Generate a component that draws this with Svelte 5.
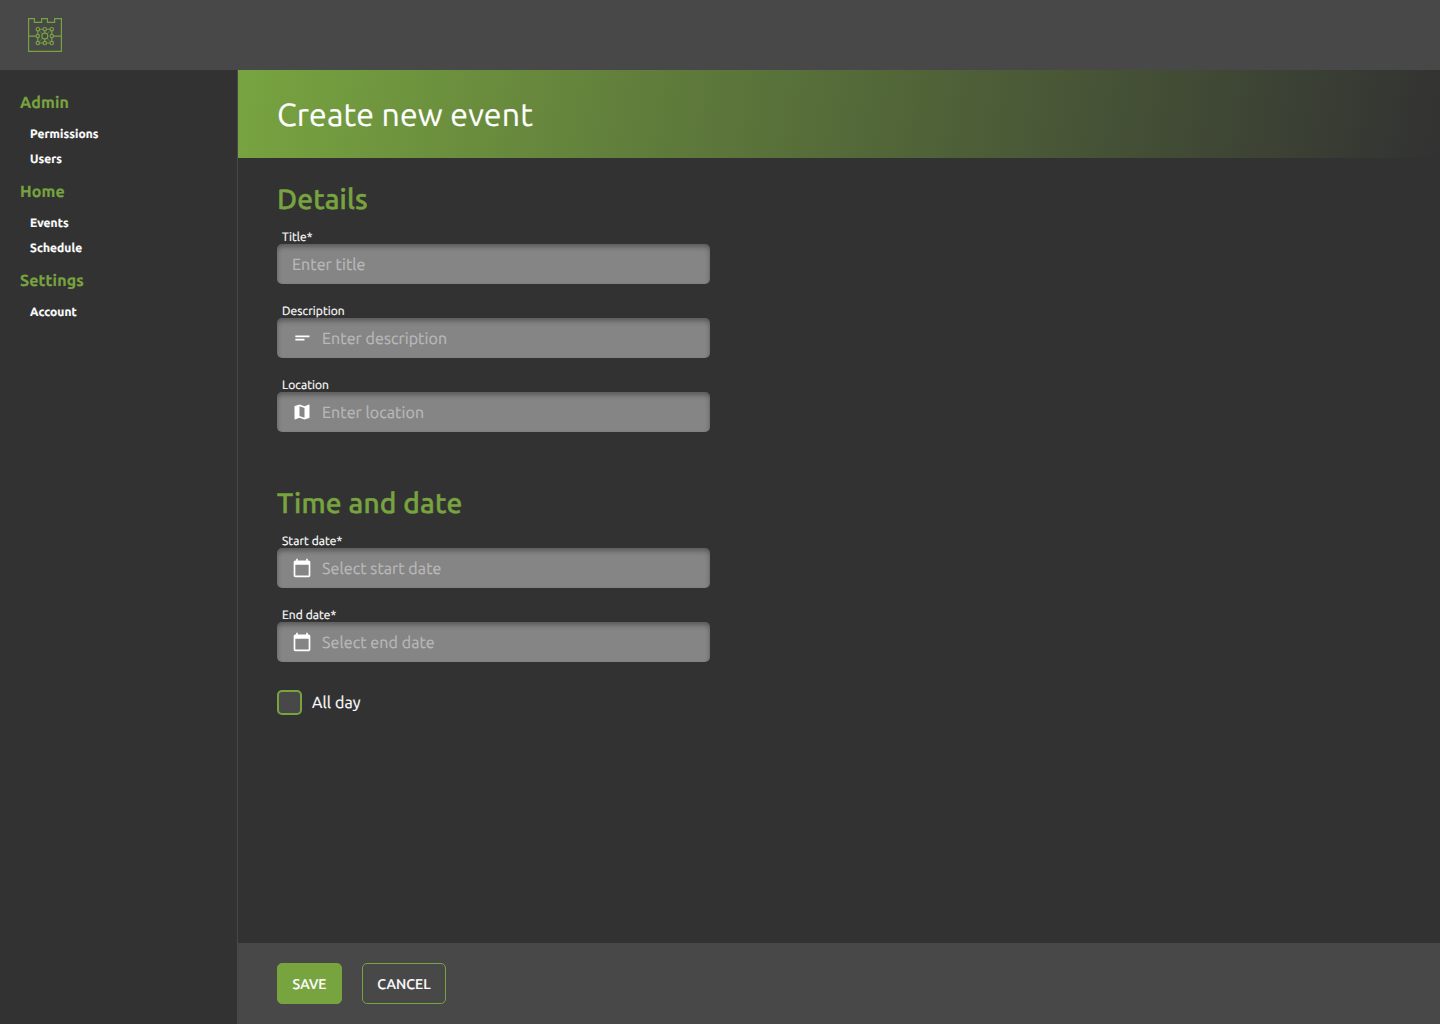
<script>
  const menu = [
    { title: 'Admin', items: ['Permissions', 'Users'] },
    { title: 'Home', items: ['Events', 'Schedule'] },
    { title: 'Settings', items: ['Account'] }
  ];
  const sections = [
    {
      title: 'Details',
      fields: [
        { label: 'Title*', hint: 'Enter title', icon: null },
        { label: 'Description', hint: 'Enter description', icon: 'notes' },
        { label: 'Location', hint: 'Enter location', icon: 'map' }
      ]
    },
    {
      title: 'Time and date',
      fields: [
        { label: 'Start date*', hint: 'Select start date', icon: 'calendar' },
        { label: 'End date*', hint: 'Select end date', icon: 'calendar' }
      ]
    }
  ];
  const icons = {
    notes: 'M4 9h17v2H4V9zm0 4h11v2H4v-2z',
    map: 'M20.5 3l-.16.03L15 5.1 9 3 3.36 4.9c-.21.07-.36.25-.36.48V20.5c0 .28.22.5.5.5l.16-.03L9 18.9l6 2.1 5.64-1.9c.21-.07.36-.25.36-.48V3.5c0-.28-.22-.5-.5-.5zM15 19l-6-2.11V5l6 2.11V19z',
    calendar: 'M20 3h-1V1h-2v2H7V1H5v2H4c-1.1 0-2 .9-2 2v16c0 1.1.9 2 2 2h16c1.1 0 2-.9 2-2V5c0-1.1-.9-2-2-2zm0 18H4V8h16v13z'
  };
  const nodes = [[17.8, 19.2], [24.8, 19.2], [31.8, 19.2], [17.8, 26.1], [31.8, 26.1], [17.8, 33], [24.8, 33], [31.8, 33]];
</script>

<div class="app">
  <header class="topbar">
    <svg class="logo" viewBox="0 0 50 50">
      <path d="M8.6 41.4V8.6H14.4V12.3H21.6V8.6H27.4V12.3H34.6V8.6H41.4V41.4Z" />
      <path d="M8.6 26.1H16.1M33.5 26.1H41.4M19.5 19.2H23.1M26.5 19.2H30.1M19.5 33H23.1M26.5 33H30.1M17.8 20.9V24.4M17.8 27.8V31.3M31.8 20.9V24.4M31.8 27.8V31.3M24.8 20.9v2.2M24.8 29.1v2.2" />
      <path class="faint" d="M19 20.4l3.7 3.6M30.6 20.4l-3.7 3.6M19 31.8l3.7-3.6M30.6 31.8l-3.7-3.6" />
      {#each nodes as [cx, cy]}
        <circle {cx} {cy} r="1.7" />
      {/each}
      <circle cx="24.8" cy="26.1" r="3" />
    </svg>
  </header>

  <div class="body">
    <nav class="sidebar">
      {#each menu as group}
        <h3>{group.title}</h3>
        {#each group.items as item}
          <a href="#top">{item}</a>
        {/each}
      {/each}
    </nav>

    <main>
      <div class="banner"><h1>Create new event</h1></div>
      <form>
        {#each sections as section}
          <section>
            <h2>{section.title}</h2>
            {#each section.fields as field}
              <div class="field">
                <span class="label">{field.label}</span>
                <div class="input">
                  {#if field.icon}
                    <svg viewBox="0 0 24 24"><path d={icons[field.icon]} /></svg>
                  {/if}
                  <span class="hint">{field.hint}</span>
                </div>
              </div>
            {/each}
          </section>
        {/each}
        <div class="check"><span class="box"></span><span class="check-text">All day</span></div>
      </form>
      <footer>
        <button class="save" type="button">SAVE</button>
        <button class="cancel" type="button">CANCEL</button>
      </footer>
    </main>
  </div>
</div>

<style>
  :global(body) {
    margin: 0;
    background: #323232;
  }
  .app {
    display: flex;
    flex-direction: column;
    height: 1024px;
    color: #fff;
    font-family: Ubuntu, 'Noto Sans', sans-serif;
    text-rendering: geometricPrecision;
    -webkit-text-stroke-width: 0.2px;
    overflow: hidden;
  }
  .topbar {
    height: 70px;
    box-sizing: border-box;
    padding: 10px 20px;
    background: #484848;
    flex: none;
  }
  .logo {
    display: block;
    width: 50px;
    height: 50px;
    fill: none;
    stroke: #78a440;
    stroke-width: 1.15;
  }
  .faint {
    opacity: 0.4;
  }
  .body {
    display: flex;
    flex: 1;
    min-height: 0;
  }
  .sidebar {
    width: 238px;
    box-sizing: border-box;
    border-right: 1px solid #484848;
    padding: 20px 20px 0;
    display: flex;
    flex-direction: column;
  }
  h1, h2, h3 {
    margin: 0;
    white-space: nowrap;
  }
  h3 {
    height: 24px;
    line-height: 26px;
    margin-bottom: 7px;
    font-size: 16px;
    letter-spacing: 0.13px;
    font-weight: 700;
    color: #78a440;
  }
  .sidebar a {
    height: 25px;
    line-height: 27px;
    padding-left: 10px;
    font-size: 12px;
    letter-spacing: 0.1px;
    font-weight: 700;
    color: #fff;
    text-decoration: none;
  }
  .sidebar a + h3 {
    margin-top: 8px;
  }
  main {
    flex: 1;
    display: flex;
    flex-direction: column;
    min-width: 0;
  }
  .banner {
    height: 88px;
    flex: none;
    padding-left: 39px;
    background: linear-gradient(100deg, #78a440 0%, #323232 100%);
  }
  h1 {
    line-height: 90px;
    font-size: 32px;
    letter-spacing: 0.17px;
    font-weight: 400;
  }
  form {
    flex: 1;
    padding: 20px 39px 0;
  }
  section {
    width: 433px;
    margin-bottom: 50px;
  }
  section + section {
    margin-bottom: 28px;
  }
  h2 {
    height: 42px;
    line-height: 44px;
    margin-bottom: 10px;
    font-size: 28px;
    letter-spacing: 0.2px;
    font-weight: 500;
    color: #78a440;
    -webkit-text-stroke-width: 0.5px;
  }
  .field {
    display: flex;
    flex-direction: column;
    margin-bottom: 20px;
  }
  .field:last-child {
    margin-bottom: 0;
  }
  section:first-child .field:last-child {
    margin-bottom: 20px;
  }
  .label {
    height: 14px;
    line-height: 16px;
    padding-left: 5px;
    font-size: 12px;
    letter-spacing: 0.08px;
  }
  .input {
    height: 40px;
    box-sizing: border-box;
    padding: 0 15px;
    display: flex;
    align-items: center;
    gap: 10px;
    background: #858585;
    border-radius: 5px;
    box-shadow: inset 0 3px 5px rgba(0, 0, 0, 0.33);
  }
  .input svg {
    width: 20px;
    height: 20px;
    fill: #fff;
  }
  .hint {
    padding-top: 2px;
    font-size: 16px;
    letter-spacing: 0.1px;
    color: #b9b9b9;
  }
  .check {
    display: flex;
    align-items: center;
    gap: 10px;
  }
  .box {
    width: 25px;
    height: 25px;
    box-sizing: border-box;
    border: 2px solid #78a440;
    border-radius: 5px;
    background: #484848;
  }
  .check-text {
    padding-top: 1px;
    font-size: 16px;
    letter-spacing: 0.13px;
  }
  footer {
    height: 81px;
    flex: none;
    box-sizing: border-box;
    padding: 20px 39px;
    display: flex;
    gap: 20px;
    background: #484848;
  }
  button {
    height: 41px;
    box-sizing: border-box;
    padding: 1px 0 0;
    border: 1px solid #78a440;
    border-radius: 5px;
    color: #fff;
    font: 500 14px/38px Ubuntu, 'Noto Sans', sans-serif;
    letter-spacing: 0.1px;
    text-rendering: geometricPrecision;
  }
  .save {
    width: 65px;
    background: #78a440;
  }
  .cancel {
    width: 84px;
    background: transparent;
  }
</style>
